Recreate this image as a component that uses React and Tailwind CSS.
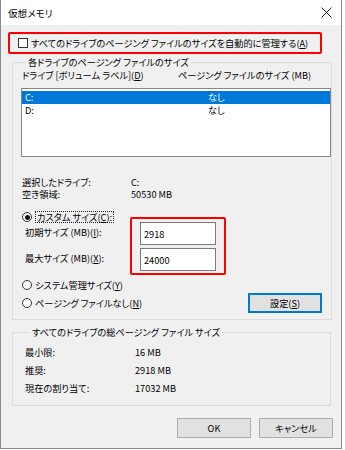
import React from "react";

const U = ({ children }) => <span className="underline underline-offset-[1px]">{children}</span>;

function Radio({ checked }) {
  return (
    <span className="w-[10px] h-[10px] rounded-full border border-[#333] bg-white flex items-center justify-center shrink-0">
      {checked && <span className="w-[5px] h-[5px] rounded-full bg-[#111]" />}
    </span>
  );
}

function Btn({ children, primary }) {
  return (
    <div
      className={`w-[74px] h-[20px] flex items-center justify-center bg-[#e1e1e1] border ${
        primary ? "border-[#0078d7] shadow-[inset_0_0_0_1px_#0078d7]" : "border-[#adadad]"
      }`}
    >
      {children}
    </div>
  );
}

export default function App() {
  return (
    <div className="w-[345px] h-[450px] bg-white text-[9.2px] leading-[12px] whitespace-nowrap text-black font-['Noto_Sans_CJK_JP','Noto_Sans',sans-serif] [font-feature-settings:'palt']">
      <div className="w-[342px] h-[449px] border-x border-b border-[#8a8a8a] bg-[#f0f0f0] flex flex-col">
        {/* title bar */}
        <div className="h-[25px] bg-white flex items-center justify-between pl-[7px] pr-[8px]">
          <span className="text-[9.6px]">仮想メモリ</span>
          <svg width="11" height="11" viewBox="0 0 11 11" className="mr-[1px]">
            <path d="M0.5 0.5 L10.5 10.5 M10.5 0.5 L0.5 10.5" stroke="#222" strokeWidth="1" />
          </svg>
        </div>

        <div className="pl-[7px] flex flex-col">
          {/* auto manage checkbox */}
          <div className="mt-[7px] w-[314px] h-[22px] border-2 border-[#ff0000] rounded-[2px] flex items-center pl-[8px]">
            <span className="w-[10px] h-[10px] border border-[#333] bg-white shrink-0" />
            <span className="ml-[3px]">すべてのドライブのページング ファイルのサイズを自動的に管理する(<U>A</U>)</span>
          </div>

          {/* per-drive group */}
          <fieldset className="ml-[4px] mt-[1px] w-[319px] border border-[#dcdcdc] pl-[8px] pb-[6px]">
            <legend className="ml-[5px] px-[2px] leading-[14px]">各ドライブのページング ファイルのサイズ</legend>
            <div className="flex h-[12px]">
              <span className="w-[157px] pl-[1px]">ドライブ [ボリューム ラベル](<U>D</U>)</span>
              <span>ページング ファイルのサイズ (MB)</span>
            </div>
            <div className="mt-[7px] w-[310px] h-[69px] border border-[#828790] bg-white pt-[2px]">
              <div className="flex h-[13px] leading-[13px] bg-[#0078d7] text-white">
                <span className="w-[186px] pl-[3px]">C:</span>
                <span>なし</span>
              </div>
              <div className="flex h-[13px] leading-[13px]">
                <span className="w-[186px] pl-[3px]">D:</span>
                <span>なし</span>
              </div>
            </div>

            <div className="mt-[19px] flex">
              <span className="w-[110px] pl-[1px]">選択したドライブ:</span>
              <span>C:</span>
            </div>
            <div className="flex">
              <span className="w-[110px] pl-[1px]">空き領域:</span>
              <span>50530 MB</span>
            </div>

            <div className="mt-[10px] flex">
              <div className="w-[109px] flex flex-col">
                <div className="h-[14px] flex items-center pl-[1px]">
                  <Radio checked />
                  <span className="ml-[3px] border border-dotted border-[#222] px-[1px] leading-[10px]">
                    カスタム サイズ(<U>C</U>):
                  </span>
                </div>
                <span className="mt-[2px] pl-[4px]">初期サイズ (MB)(<U>I</U>):</span>
                <span className="mt-[14px] pl-[4px]">最大サイズ (MB)(<U>X</U>):</span>
              </div>
              <div className="mt-[7px] w-[96px] h-[58px] border-2 border-[#ff0000] rounded-[2px] pl-[8px] pt-[3px] flex flex-col gap-[3px]">
                <div className="w-[76px] h-[23px] border border-[#7a7a7a] bg-white flex items-center pl-[3px]">2918</div>
                <div className="w-[76px] h-[23px] border border-[#7a7a7a] bg-white flex items-center pl-[3px]">24000</div>
              </div>
            </div>

            <div className="mt-[3px] flex items-start">
              <div className="w-[227px] flex flex-col">
                <div className="h-[14px] flex items-center pl-[1px]">
                  <Radio />
                  <span className="ml-[3px]">システム管理サイズ(<U>Y</U>)</span>
                </div>
                <div className="mt-[4px] h-[14px] flex items-center pl-[1px]">
                  <Radio />
                  <span className="ml-[3px]">ページング ファイルなし(<U>N</U>)</span>
                </div>
              </div>
              <div className="mt-[15px]">
                <Btn primary>
                  <span>設定(<U>S</U>)</span>
                </Btn>
              </div>
            </div>
          </fieldset>

          {/* totals group */}
          <fieldset className="ml-[4px] mt-[5px] w-[319px] border border-[#dcdcdc] pl-[12px] pb-[11px]">
            <legend className="ml-[5px] px-[2px] leading-[14px]">すべてのドライブの総ページング ファイル サイズ</legend>
            <div className="mt-[7px] flex">
              <span className="w-[110px]">最小限:</span>
              <span>16 MB</span>
            </div>
            <div className="mt-[6px] flex">
              <span className="w-[110px]">推奨:</span>
              <span>2918 MB</span>
            </div>
            <div className="mt-[6px] flex">
              <span className="w-[110px]">現在の割り当て:</span>
              <span>17032 MB</span>
            </div>
          </fieldset>

          <div className="mt-[12px] pl-[169px] flex gap-[8px]">
            <Btn>OK</Btn>
            <Btn>キャンセル</Btn>
          </div>
        </div>
      </div>
    </div>
  );
}
